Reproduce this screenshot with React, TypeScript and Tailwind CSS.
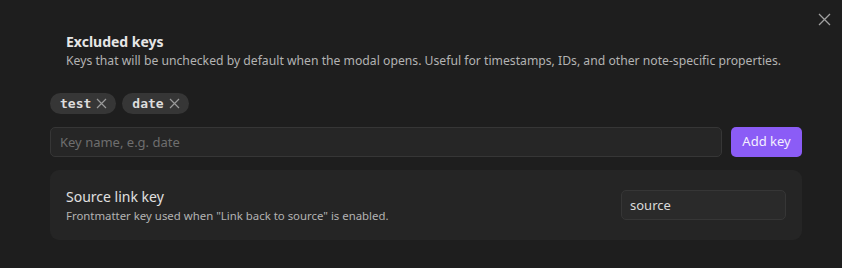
export default function App() {
    return (
        <div
            className="relative h-[268px] w-full bg-[#1e1e1e] text-[#dadada]"
            style={{ fontFamily: '"Noto Sans", "Open Sans", sans-serif' }}
        >
            <button className="absolute right-[10px] top-[11px] flex h-[16px] w-[16px] items-center justify-center text-[#a0a0a0]">
                <svg width="13" height="13" viewBox="0 0 13 13" fill="none" stroke="currentColor" strokeWidth="1.3">
                    <path d="M1 1L12 12M12 1L1 12" />
                </svg>
            </button>

            <div className="w-[752px] pl-[50px] pt-[33px] box-content">
                <div className="pl-4">
                    <h2 className="text-[14px] font-bold leading-[17px] text-[#e6e6e6]">Excluded keys</h2>
                    <p className="mt-[2px] text-[12.2px] leading-[17px] text-[#b3b3b3]">
                        Keys that will be unchecked by default when the modal opens. Useful for timestamps, IDs, and
                        other note-specific properties.
                    </p>
                </div>

                <div className="mt-[24px] flex gap-[6px]">
                    {["test", "date"].map((k) => (
                        <span
                            key={k}
                            className="flex h-[21px] items-center gap-[5px] rounded-full bg-[#363636] pl-[10px] pr-[9px] text-[13px] font-bold text-[#dcdcdc]"
                            style={{ fontFamily: '"DejaVu Sans Mono", "Liberation Mono", monospace' }}
                        >
                            {k}
                            <svg width="11" height="11" viewBox="0 0 11 11" fill="none" stroke="#9a9a9a" strokeWidth="1.2">
                                <path d="M1 1L10 10M10 1L1 10" />
                            </svg>
                        </span>
                    ))}
                </div>

                <div className="mt-[13px] flex gap-[9px]">
                    <input
                        className="h-[30px] flex-1 rounded-[5px] border border-[#363636] bg-[#262626] px-[9px] text-[13px] text-[#dadada] outline-none placeholder:text-[#6e6e6e]"
                        placeholder="Key name, e.g. date"
                    />
                    <button className="h-[30px] w-[71px] rounded-[5px] bg-[#8b5cf6] text-[13px] text-[#f4f0ff]">
                        Add key
                    </button>
                </div>

                <div className="mt-[13px] flex h-[70px] items-center justify-between rounded-[9px] bg-[#252525] pl-4 pr-4">
                    <div>
                        <div className="text-[14px] leading-[20px] text-[#e0e0e0]">Source link key</div>
                        <div className="mt-[1px] text-[11.4px] leading-[16px] text-[#b3b3b3]">
                            Frontmatter key used when "Link back to source" is enabled.
                        </div>
                    </div>
                    <input
                        className="h-[30px] w-[165px] rounded-[5px] border border-[#363636] bg-[#2a2a2a] px-[8px] text-[13px] text-[#dadada] outline-none"
                        defaultValue="source"
                    />
                </div>
            </div>
        </div>
    );
}
